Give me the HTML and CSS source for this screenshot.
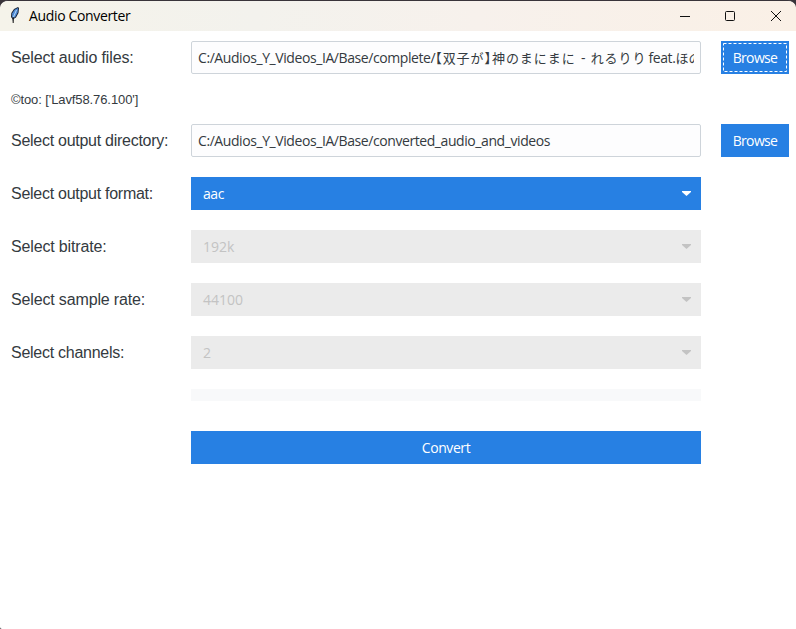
FILE: index.html
```html
<!DOCTYPE html>
<html lang="en">
<head>
<meta charset="utf-8">
<title>Audio Converter</title>
<link rel="stylesheet" href="styles.css">
</head>
<body>
<div class="window">
  <header class="titlebar">
    <svg class="feather" width="10" height="18" viewBox="0 0 10 18">
      <path d="M3 16 2.5 13 1 11 1.3 7 4 3 8 1 9 2 8.5 7 6 11.5 3.5 13z" fill="#172033"/>
      <path d="M2 10.8 2.3 7.2 4.6 3.7 8 1.9 7.7 6.3 5.4 10.8 3.6 12.3z" fill="#4f8bd5"/>
      <path d="M3 12 6.5 4" stroke="#b3d5f6" fill="none"/>
      <path d="M3.2 11v6" stroke="#111" fill="none"/>
    </svg>
    <h1 class="title">Audio Converter</h1>
    <div class="controls">
      <svg width="12" height="12" viewBox="0 0 12 12"><path d="M1 6.5h10"/></svg>
      <svg width="12" height="12" viewBox="0 0 12 12"><rect x="1.5" y="1.5" width="9" height="9" rx="1"/></svg>
      <svg width="12" height="12" viewBox="0 0 12 12"><path d="M1 1l10 10M11 1L1 11"/></svg>
    </div>
  </header>
  <main class="form">
    <div class="label wide">Select audio files:</div>
    <div class="entry"><div class="entry-clip"><span>C:/Audios_Y_Videos_IA/Base/complete/</span><span class="jp">【双子が】神のまにまに</span><span class="dash">-</span><span class="jp">れるりり</span><span class="feat">feat.</span><span class="jp tight">ほの</span></div></div>
    <div class="button browse">Browse<svg class="focus-ring" width="64" height="29" viewBox="0 0 64 29"><rect x=".5" y=".5" width="63" height="28"/></svg></div>

    <div class="metadata">©too: ['Lavf58.76.100']</div>

    <div class="label">Select output directory:</div>
    <div class="entry"><div class="entry-clip"><span>C:/Audios_Y_Videos_IA/Base/converted_audio_and_videos</span></div></div>
    <div class="button browse">Browse</div>

    <div class="label">Select output format:</div>
    <div class="select"><span>aac</span><svg width="9" height="5" viewBox="0 0 9 5"><path d="M0 0h9v1L4.5 5 0 1z"/></svg></div>

    <div class="label wide">Select bitrate:</div>
    <div class="select disabled"><span>192k</span><svg width="9" height="5" viewBox="0 0 9 5"><path d="M0 0h9v1L4.5 5 0 1z"/></svg></div>

    <div class="label wide">Select sample rate:</div>
    <div class="select disabled"><span>44100</span><svg width="9" height="5" viewBox="0 0 9 5"><path d="M0 0h9v1L4.5 5 0 1z"/></svg></div>

    <div class="label">Select channels:</div>
    <div class="select disabled"><span>2</span><svg width="9" height="5" viewBox="0 0 9 5"><path d="M0 0h9v1L4.5 5 0 1z"/></svg></div>

    <div class="progress"></div>
    <div class="button convert">Convert</div>
  </main>
</div>
</body>
</html>
```
FILE: styles.css
```css
* { box-sizing: border-box; }
body { margin: 0; background: #39343a; overflow: hidden; }
.window {
  height: 629px;
  background: #fff;
  border-top: 1px solid #39343a;
  border-radius: 8px 8px 0 2px;
  overflow: hidden;
  font: 14px/20px "Open Sans", "Noto Sans CJK JP", sans-serif;
  letter-spacing: -0.42px;
  color: #343a40;
}
.titlebar {
  height: 30px;
  display: flex;
  align-items: center;
  padding: 0 14px 0 10px;
  background: linear-gradient(90deg, #f5f3ea 0%, #f3f2ed 32%, #f7f1ec 60%, #faf0e6 100%);
}
.feather { margin-top: -2px; }
.title { margin: 0 0 0 9px; font: inherit; letter-spacing: -0.35px; color: #000; }
.controls { margin-left: auto; display: flex; gap: 33px; }
.controls svg { fill: none; stroke: #111; stroke-width: 1; }
.controls svg:last-child { margin-left: 1px; }
.form {
  display: grid;
  grid-template-columns: 160px 510px 68px;
  grid-template-rows: 33px 10px 33px 33px 33px 33px 33px 12px 33px;
  column-gap: 20px;
  row-gap: 20px;
  padding: 10px 7px 0 11px;
}
.label {
  grid-column: 1;
  font: 16px/33px "Liberation Sans", sans-serif;
  letter-spacing: -0.27px;
  white-space: nowrap;
}
.label.wide { letter-spacing: -0.15px; }
.metadata {
  grid-column: 1 / -1;
  font: 13px/12px "Liberation Sans", sans-serif;
  letter-spacing: -0.1px;
  white-space: nowrap;
}
.entry {
  border: 1px solid #ced4da;
  border-radius: 2px;
  background: #fdfdfe;
  padding: 0 6px;
}
.entry-clip { display: flex; overflow: hidden; white-space: nowrap; line-height: 32px; height: 31px; }
.entry-clip > span { flex: none; }
.jp {
  font: 13px/31px "Noto Sans CJK JP", sans-serif;
  letter-spacing: 0.95px;
  font-feature-settings: "halt";
}
.jp.tight { letter-spacing: 0; }
.dash { width: 15px; text-align: center; }
.feat { margin-left: 2px; }
.button {
  background: #2780e3;
  color: #fff;
  text-align: center;
  line-height: 34px;
  position: relative;
}
.browse { letter-spacing: -0.65px; }
.focus-ring { position: absolute; inset: 2px; fill: none; stroke: #fff; stroke-dasharray: 3 2; }
.select {
  background: #2780e3;
  color: #fff;
  display: flex;
  align-items: center;
  justify-content: space-between;
  padding: 0 10px 0 12px;
  line-height: 34px;
}
.select svg { fill: currentColor; }
.disabled { background: #ebebeb; color: #c3c3c3; letter-spacing: 0; }
.progress { grid-column: 2; background: #f8f9fa; }
.convert { grid-column: 2; margin-top: 10px; height: 33px; }
```
